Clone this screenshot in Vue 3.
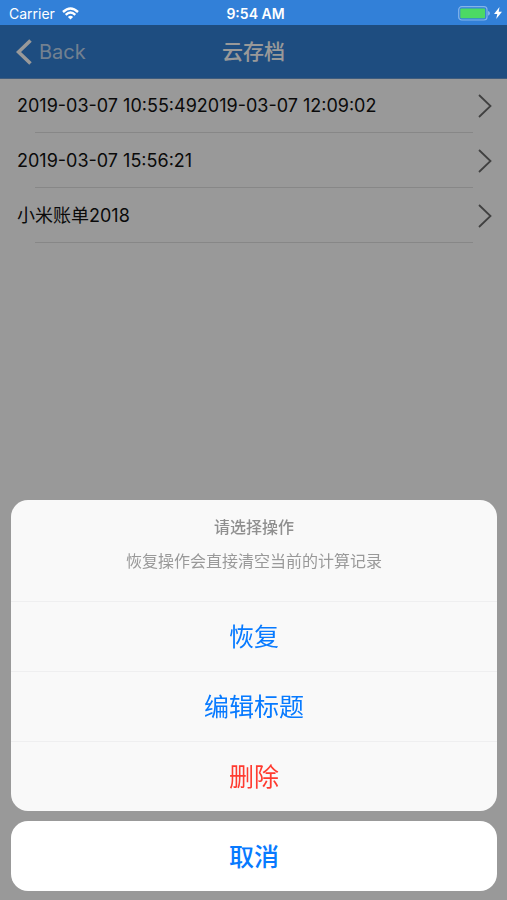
<template>
    <div class="page">
        <header class="status-bar">
            <div class="status-left">
                <span>Carrier</span>
                <svg class="wifi" viewBox="0 0 17 13" aria-hidden="true">
                    <path d="M1 5 Q8.500 -2 16 5" />
                    <path d="M3.700 7.800 Q8.500 3.400 13.300 7.800" />
                    <path class="wifi-dot" d="M5.900 9.900 Q8.500 7.600 11.100 9.900 L8.500 12.600 Z" />
                </svg>
            </div>
            <span class="time">9:54 AM</span>
            <div class="status-right">
                <svg class="battery" viewBox="0 0 32 15" aria-hidden="true">
                    <rect class="battery-case" x="0.700" y="0.700" width="28.300" height="13.300" rx="3" />
                    <rect class="battery-level" x="2.300" y="2.500" width="24.800" height="9.700" rx="1" />
                    <path class="battery-tip" d="M30 5 Q32 5.500 32 7.300 Q32 9.200 30 9.700 Z" />
                </svg>
                <svg class="bolt" viewBox="0 0 8 12" aria-hidden="true">
                    <path d="M5.500 0 L0 6.900 H3.300 L2.200 12 L8 4.800 H4.700 Z" />
                </svg>
            </div>
        </header>

        <nav class="nav-bar">
            <button type="button" class="back">
                <svg viewBox="0 0 16 26" aria-hidden="true">
                    <path d="M14.500 1.500 L2.500 13 L14.500 24.500" />
                </svg>
                <span>Back</span>
            </button>
            <h1 class="nav-title">云存档</h1>
        </nav>

        <ul class="archives">
            <li v-for="archive in archives" :key="archive" class="archive">
                <button type="button" class="archive-button">
                    <span>{{ archive }}</span>
                    <svg viewBox="0 0 14 24" aria-hidden="true">
                        <path d="M1 1 L12.500 12 L1 23" />
                    </svg>
                </button>
            </li>
        </ul>

        <div v-if="sheetOpen" class="overlay">
            <section class="sheet" role="dialog" aria-labelledby="sheet-title">
                <div class="sheet-group">
                    <div class="sheet-header">
                        <h2 id="sheet-title">请选择操作</h2>
                        <p>恢复操作会直接清空当前的计算记录</p>
                    </div>
                    <button
                        v-for="action in actions"
                        :key="action.label"
                        type="button"
                        class="sheet-button"
                        :class="{ destructive: action.destructive }"
                        @click="closeSheet"
                    >{{ action.label }}</button>
                </div>
                <button type="button" class="sheet-button cancel" @click="closeSheet">取消</button>
            </section>
        </div>
    </div>
</template>

<script setup>
import { ref } from "vue";

const archives = [
    "2019-03-07 10:55:492019-03-07 12:09:02",
    "2019-03-07 15:56:21",
    "小米账单2018",
];

const actions = [
    { label: "恢复" },
    { label: "编辑标题" },
    { label: "删除", destructive: true },
];

const sheetOpen = ref(true);

function closeSheet() {
    sheetOpen.value = false;
}
</script>

<style>
body {
    margin: 0;
    background: #fff;
}
</style>

<style scoped>
.page {
    min-height: 100vh;
    color: #111;
    font-family: Inter, "Noto Sans CJK SC", sans-serif;
}

button {
    margin: 0;
    padding: 0;
    border: 0;
    background: none;
    color: inherit;
    font-family: inherit;
    cursor: pointer;
}

svg {
    display: block;
    flex: none;
    fill: none;
}

/* stays bright above the dimmed page */
.status-bar {
    position: relative;
    z-index: 2;
    display: grid;
    grid-template-columns: 1fr auto 1fr;
    align-items: center;
    height: 25px;
    padding: 1px 5px 0 9px;
    box-sizing: border-box;
    background: #3280d8;
    color: #fff;
    font-size: 14px;
}

.status-left,
.status-right {
    display: flex;
    align-items: center;
}

.status-left {
    gap: 7px;
}

.status-right {
    justify-content: flex-end;
    gap: 4px;
}

.time {
    font-weight: 600;
}

.wifi {
    width: 17px;
    height: 13px;
    stroke: #fff;
    stroke-width: 2.4;
}

.wifi-dot {
    fill: #fff;
    stroke: none;
}

.battery {
    width: 32px;
    height: 15px;
}

.battery-case {
    stroke: #84b4ea;
    stroke-width: 1.2;
}

.battery-level {
    fill: #4cd964;
}

.battery-tip {
    fill: #84b4ea;
}

.bolt {
    width: 8px;
    height: 12px;
    fill: #fff;
}

.nav-bar {
    display: grid;
    grid-template-columns: 1fr auto 1fr;
    align-items: center;
    height: 54px;
    padding: 0 16px;
    box-sizing: border-box;
    border-bottom: 1px solid #6a9ad0;
    background: #3280d5;
    color: #fff;
}

.back {
    display: flex;
    align-items: center;
    justify-self: start;
    gap: 7px;
    color: rgba(255, 255, 255, 0.7);
    font-size: 20px;
}

.back svg {
    width: 16px;
    height: 26px;
    stroke: #fff;
    stroke-width: 3.6;
}

.nav-title {
    margin: 0;
    font-size: 21px;
    font-weight: 500;
    line-height: 28px;
}

.archives {
    display: flex;
    flex-direction: column;
    gap: 1px;
    margin: 0;
    padding: 0;
    list-style: none;
}

.archive::after {
    content: "";
    display: block;
    height: 1px;
    margin: 0 34px 0 35px;
    background: #e2e2e2;
}

.archive-button {
    display: flex;
    align-items: center;
    justify-content: space-between;
    width: 100%;
    height: 53px;
    padding: 1px 15px 0 17px;
    font-size: 18px;
    line-height: 24px;
    text-align: left;
}

.archive-button svg {
    width: 14px;
    height: 24px;
    stroke: #6c6c6c;
    stroke-width: 1.8;
}

.overlay {
    position: fixed;
    inset: 0;
    z-index: 1;
    display: flex;
    align-items: flex-end;
    background: rgba(0, 0, 0, 0.4);
}

.sheet {
    display: flex;
    flex: 1;
    flex-direction: column;
    gap: 10px;
    padding: 10px 10px 9px 11px;
}

.sheet-group {
    display: flex;
    flex-direction: column;
    overflow: hidden;
    border-radius: 17px;
    background: #f9f9f9;
}

.sheet-header {
    padding: 15px 16px 28px;
    color: #8f8f8f;
    font-size: 16px;
    line-height: 24px;
    text-align: center;
}

.sheet-header h2 {
    margin: 0 0 10px;
    font-size: 16px;
    font-weight: 500;
}

.sheet-header p {
    margin: 0;
    color: #999;
}

.sheet-button {
    height: 70px;
    padding-bottom: 3px;
    border-top: 1px solid #efeff0;
    color: #077aff;
    font-size: 25px;
}

.destructive {
    color: #ff3b30;
}

.cancel {
    border-top: 0;
    border-radius: 17px;
    background: #fff;
    font-weight: 500;
}
</style>
